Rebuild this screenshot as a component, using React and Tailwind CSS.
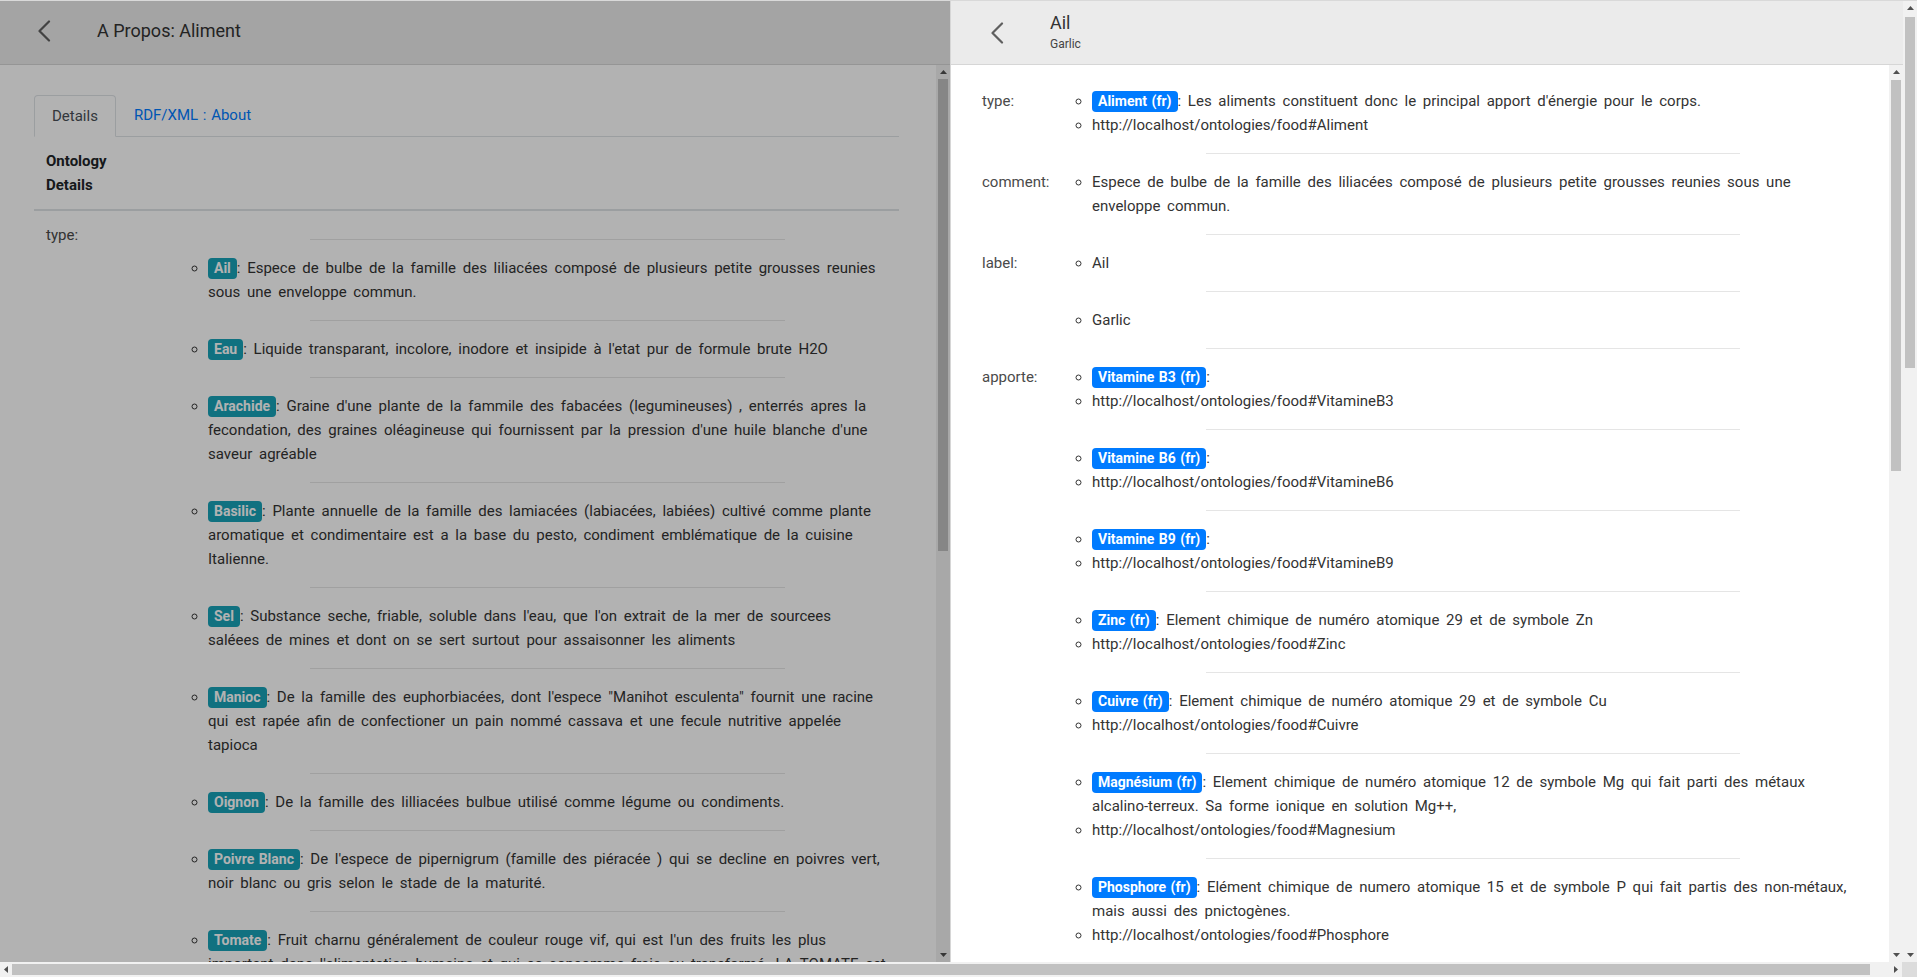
import React from 'react';

const Chevron = () => (
  <svg width="14" height="22" viewBox="0 0 14 22" fill="none" stroke="#5f5f5f" strokeWidth="2.2" strokeLinecap="round" strokeLinejoin="round">
    <path d="M12 1.5 L2.5 11 L12 20.5" />
  </svg>
);

const Arrow = ({ dir }) => {
  const pts = {
    up: '0,4 3.5,0 7,4',
    down: '0,0 7,0 3.5,4',
    left: '4,0 4,7 0,3.5',
    right: '0,0 0,7 4,3.5',
  }[dir];
  const vertical = dir === 'up' || dir === 'down';
  return (
    <svg width={vertical ? 7 : 4} height={vertical ? 4 : 7} viewBox={vertical ? '0 0 7 4' : '0 0 4 7'}>
      <polygon points={pts} fill="#505050" />
    </svg>
  );
};

// fake classic scrollbar, offset/thumb are full class names
const VScroll = ({ offset, thumb }) => (
  <div className="flex w-[14px] shrink-0 flex-col bg-[#f1f1f1]">
    <div className="flex h-[14px] items-center justify-center">
      <Arrow dir="up" />
    </div>
    <div className="flex-1 px-[2px]">
      <div className={offset} />
      <div className={`bg-[#c1c1c1] ${thumb}`} />
    </div>
    <div className="flex h-[14px] items-center justify-center">
      <Arrow dir="down" />
    </div>
  </div>
);

const Badge = ({ children, color }) => (
  <span className={`inline-block rounded-[4px] px-[6px] py-[4px] text-[14px] font-bold leading-[13px] text-white [word-spacing:1px] ${color}`}>
    {children}
  </span>
);

const Item = ({ badge, text, color }) => (
  <li className="list-[circle]">
    {badge && <Badge color={color}>{badge}</Badge>}
    {text}
  </li>
);

const Rule = () => <hr className="mx-auto my-4 w-[70%] border-t border-black/10" />;

const leftItems = [
  { badge: 'Ail', text: ': Espece de bulbe de la famille des liliacées composé de plusieurs petite grousses reunies sous une enveloppe commun.' },
  { badge: 'Eau', text: ": Liquide transparant, incolore, inodore et insipide à l'etat pur de formule brute H2O" },
  { badge: 'Arachide', text: ": Graine d'une plante de la fammile des fabacées (legumineuses) , enterrés apres la fecondation, des graines oléagineuse qui fournissent par la pression d'une huile blanche d'une saveur agréable" },
  { badge: 'Basilic', text: ': Plante annuelle de la famille des lamiacées (labiacées, labiées) cultivé comme plante aromatique et condimentaire est a la base du pesto, condiment emblématique de la cuisine Italienne.' },
  { badge: 'Sel', text: ": Substance seche, friable, soluble dans l'eau, que l'on extrait de la mer de sourcees saléees de mines et dont on se sert surtout pour assaisonner les aliments" },
  { badge: 'Manioc', text: ': De la famille des euphorbiacées, dont l\'espece "Manihot esculenta" fournit une racine qui est rapée afin de confectioner un pain nommé cassava et une fecule nutritive appelée tapioca' },
  { badge: 'Oignon', text: ': De la famille des lilliacées bulbue utilisé comme légume ou condiments.' },
  { badge: 'Poivre Blanc', text: ": De l'espece de pipernigrum (famille des piéracée ) qui se decline en poivres vert, noir blanc ou gris selon le stade de la maturité." },
  { badge: 'Tomate', text: ": Fruit charnu généralement de couleur rouge vif, qui est l'un des fruits les plus important dans l'alimentation humaine et qui se consomme frais ou transformé. LA TOMATE est originaire d'Amérique du Sud." },
];

const url = (name) => ({ text: `http://localhost/ontologies/food#${name}` });

const rightGroups = [
  {
    label: 'type:',
    items: [{ badge: 'Aliment (fr)', text: ": Les aliments constituent donc le principal apport d'énergie pour le corps." }, url('Aliment')],
  },
  { label: 'comment:', items: [{ text: 'Espece de bulbe de la famille des liliacées composé de plusieurs petite grousses reunies sous une enveloppe commun.' }] },
  { label: 'label:', items: [{ text: 'Ail' }] },
  { label: '', items: [{ text: 'Garlic' }] },
  { label: 'apporte:', items: [{ badge: 'Vitamine B3 (fr)', text: ':' }, url('VitamineB3')] },
  { label: '', items: [{ badge: 'Vitamine B6 (fr)', text: ':' }, url('VitamineB6')] },
  { label: '', items: [{ badge: 'Vitamine B9 (fr)', text: ':' }, url('VitamineB9')] },
  { label: '', items: [{ badge: 'Zinc (fr)', text: ': Element chimique de numéro atomique 29 et de symbole Zn' }, url('Zinc')] },
  { label: '', items: [{ badge: 'Cuivre (fr)', text: ': Element chimique de numéro atomique 29 et de symbole Cu' }, url('Cuivre')] },
  {
    label: '',
    items: [{ badge: 'Magnésium (fr)', text: ': Element chimique de numéro atomique 12 de symbole Mg qui fait parti des métaux alcalino-terreux. Sa forme ionique en solution Mg++,' }, url('Magnesium')],
  },
  {
    label: '',
    items: [{ badge: 'Phosphore (fr)', text: ': Elément chimique de numero atomique 15 et de symbole P qui fait partis des non-métaux, mais aussi des pnictogènes.' }, url('Phosphore')],
  },
];

const LeftPanel = () => (
  <div className="relative flex w-[950px] shrink-0 flex-col">
    <div className="flex h-[64px] shrink-0 items-center border-b border-[#d6d6d6] bg-[#ebebeb] pb-[3px] pl-[37px] [word-spacing:0]">
      <Chevron />
      <span className="ml-[46px] text-[18px] text-[#333]">A Propos: Aliment</span>
    </div>
    <div className="flex min-h-0 flex-1 bg-white">
      <div className="flex-1 overflow-hidden pl-[34px] pr-[37px] pt-[30px]">
        <div className="flex border-b border-[#dee2e6]">
          <div className="-mb-px rounded-t-[4px] border border-b-white border-[#dee2e6] bg-white px-[17px] py-2 text-[#495057]">Details</div>
          <div className="px-[18px] py-2 text-[#007bff] [word-spacing:1px]">RDF/XML : About</div>
        </div>
        <div className="border-b-2 border-[#dee2e6] p-3 font-bold text-[#212529]">
          <div className="w-[98px]">Ontology Details</div>
        </div>
        <div className="flex">
          <div className="w-[122px] shrink-0 p-3 text-[#4a4a4a]">type:</div>
          <div className="flex-1 p-3">
            <ul className="pl-10">
              {leftItems.map((it) => (
                <React.Fragment key={it.badge}>
                  <Rule />
                  <Item {...it} color="bg-[#17a2b8]" />
                </React.Fragment>
              ))}
            </ul>
          </div>
        </div>
      </div>
      <VScroll offset="h-0" thumb="h-[472px]" />
    </div>
    {/* modal backdrop */}
    <div className="absolute inset-0 bg-black/30" />
  </div>
);

const RightPanel = () => (
  <div className="flex min-w-0 flex-1 flex-col border-l border-[#d6d6d6]">
    <div className="flex h-[64px] shrink-0 items-center border-b border-[#d6d6d6] bg-[#ebebeb] pl-[39px] [word-spacing:0]">
      <Chevron />
      <div className="ml-[46px] flex flex-col pb-[1px]">
        <span className="text-[18px] leading-[20px] text-[#333]">Ail</span>
        <span className="mt-[3px] text-[12px] leading-[16px] text-[#444]">Garlic</span>
      </div>
    </div>
    <div className="flex min-h-0 flex-1 bg-white">
      <div className="flex-1 overflow-hidden pl-[31px] pr-[35px] pt-[24px]">
        {rightGroups.map((g, i) => (
          <React.Fragment key={i}>
            {i > 0 && (
              <div className="flex">
                <div className="w-[70px] shrink-0" />
                <div className="flex-1 pl-10">
                  <Rule />
                </div>
              </div>
            )}
            <div className="flex">
              <div className="w-[70px] shrink-0 text-[#4a4a4a]">{g.label}</div>
              <ul className="flex-1 pl-10">
                {g.items.map((it, j) => (
                  <Item key={j} {...it} color="bg-[#007bff]" />
                ))}
              </ul>
            </div>
          </React.Fragment>
        ))}
      </div>
      <VScroll offset="h-[1px]" thumb="h-[391px]" />
    </div>
  </div>
);

export default function App() {
  return (
    <div className="flex h-[977px] w-[1917px] flex-col overflow-hidden bg-white font-[Roboto,sans-serif] text-[15px] leading-6 text-[#333] [word-spacing:3px]">
      <div className="flex h-[962px] shrink-0 border-t border-[#d9d9d9]">
        <LeftPanel />
        <RightPanel />
        <VScroll offset="h-[2px]" thumb="h-[351px]" />
      </div>
      <div className="flex h-[15px] shrink-0 bg-[#f1f1f1]">
        <div className="flex w-[12px] items-center justify-center">
          <Arrow dir="left" />
        </div>
        <div className="flex-1 py-[2px]">
          <div className="h-full w-[1858px] bg-[#c1c1c1]" />
        </div>
        <div className="flex w-[13px] items-center justify-center">
          <Arrow dir="right" />
        </div>
        <div className="w-[15px] bg-[#dcdcdc]" />
      </div>
    </div>
  );
}
